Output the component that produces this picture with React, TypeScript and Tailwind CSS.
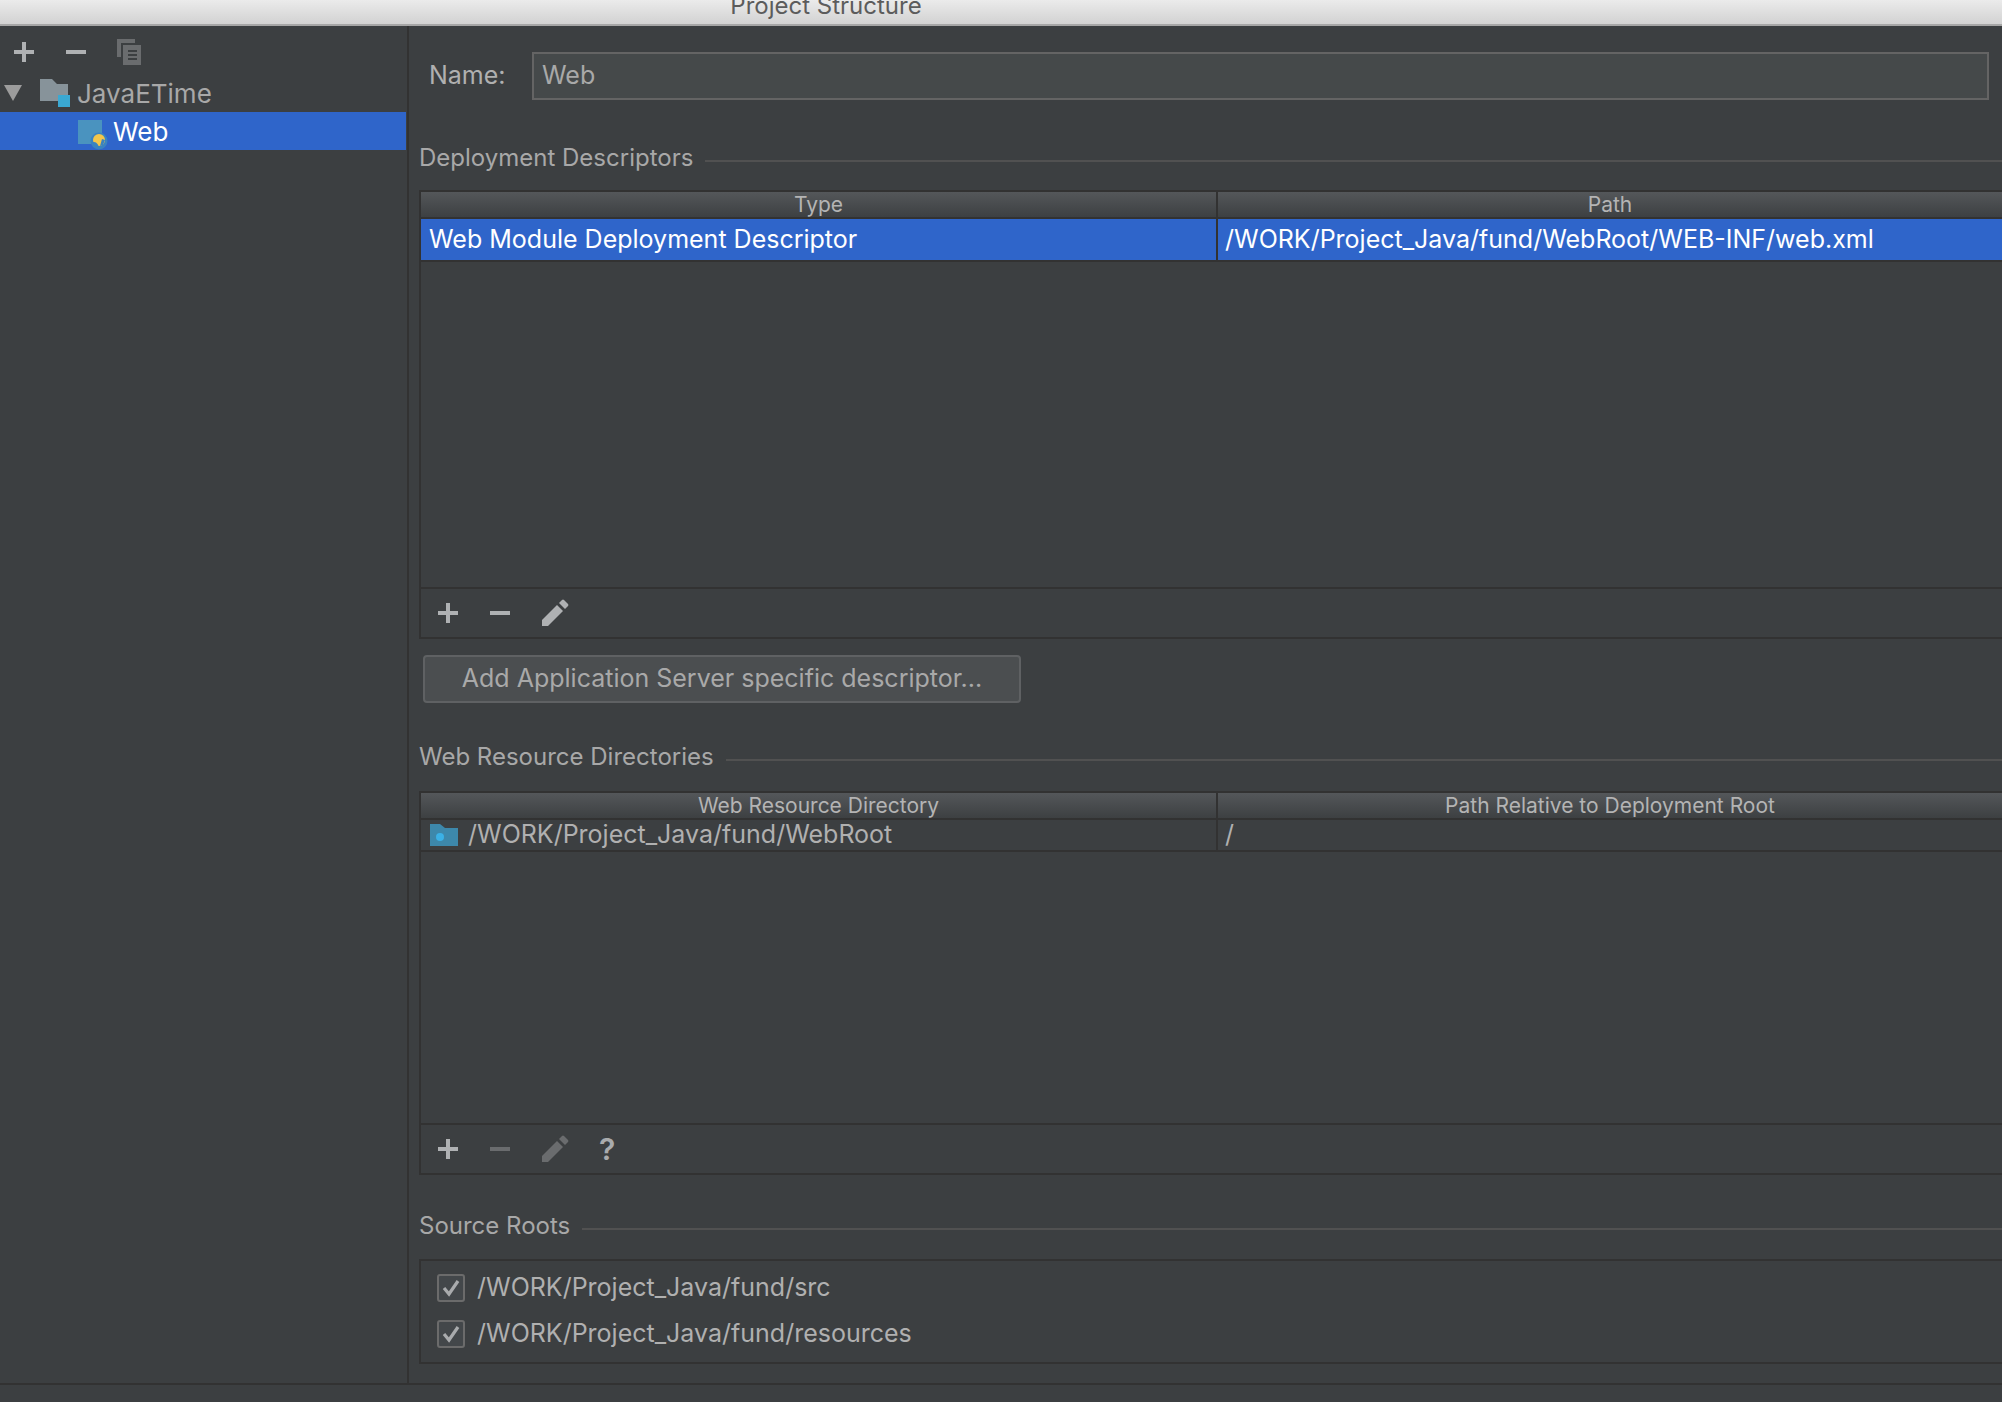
import type { ReactNode } from 'react';

const iconGray = '#afb1b3';
const iconDim = '#6a6c6e';

function PlusIcon({ color = iconGray }: { color?: string }) {
  return (
    <svg width="22" height="22" viewBox="0 0 22 22" fill="none">
      <path d="M11 1v20M1 11h20" stroke={color} strokeWidth="4" />
    </svg>
  );
}

function MinusIcon({ color = iconGray }: { color?: string }) {
  return (
    <svg width="22" height="22" viewBox="0 0 22 22" fill="none">
      <path d="M1 11h20" stroke={color} strokeWidth="4" />
    </svg>
  );
}

function PencilIcon({ color = iconGray }: { color?: string }) {
  return (
    <svg width="28" height="28" viewBox="0 0 28 28" fill={color}>
      <path d="M1 27v-6L16 6l6 6L7 27z" />
      <path d="M18 4l3-3a1.5 1.5 0 0 1 2 0l4 4a1.5 1.5 0 0 1 0 2l-3 3z" />
    </svg>
  );
}

function CopyIcon() {
  return (
    <svg width="24" height="26" viewBox="0 0 24 26" fill={iconDim}>
      <path d="M0 0h18v4H4v14H0z" />
      <path fillRule="evenodd" d="M6 6h18v20H6zM11 11v2h9v-2zM11 15v2h9v-2zM11 19v2h9v-2z" />
    </svg>
  );
}

function FolderIcon() {
  return (
    <svg width="30" height="28" viewBox="0 0 30 28">
      <path d="M0 0h12l5 5h11v17H0z" fill="#87939a" />
      <rect x="18" y="16" width="12" height="12" fill="#3c3f41" />
      <rect x="18" y="16" width="12" height="12" fill="#3aa9d3" />
    </svg>
  );
}

function WebModuleIcon() {
  return (
    <svg width="30" height="30" viewBox="0 0 30 30">
      <rect x="0" y="0" width="24" height="24" fill="#4a93bf" />
      <circle cx="21" cy="21" r="8.5" fill="#3a83c0" />
      <circle cx="21" cy="20" r="6" fill="#f3c64a" />
      <path d="M15 22c3 0 5 1 6 6h-3c-2-1-3-3-3-6zM24 19l3 1-2 5-3 1z" fill="#3a83c0" />
    </svg>
  );
}

function BlueFolderIcon() {
  return (
    <svg width="28" height="22" viewBox="0 0 28 22">
      <path d="M0 0h10l5 4h13v18H0z" fill="#3d88ab" />
      <circle cx="10" cy="13" r="4" fill="#3bb1e6" />
    </svg>
  );
}

function Checkbox() {
  return (
    <span className="flex h-[28px] w-[28px] shrink-0 items-center justify-center rounded-[3px] border-2 border-[#6b6b6b] bg-[#43474a]">
      <svg width="18" height="18" viewBox="0 0 18 18" fill="none">
        <path d="M2 9l5 6 9-13" stroke="#a9abad" strokeWidth="3.2" />
      </svg>
    </span>
  );
}

function SectionTitle({ children }: { children: ReactNode }) {
  return (
    <div className="flex h-[30px] items-center gap-[12px] text-[24px] text-[#a8a8a8]">
      <span className="shrink-0">{children}</span>
      <span className="mt-[6px] h-[2px] flex-1 bg-[#515151]" />
    </div>
  );
}

function HeaderCell({ children, wide }: { children: ReactNode; wide?: boolean }) {
  return (
    <div className={wide ? 'flex-1 text-center' : 'w-[797px] shrink-0 border-r-2 border-[#323232] text-center'}>
      {children}
    </div>
  );
}

function TableHeader({ left, right }: { left: string; right: string }) {
  return (
    <div className="flex h-[27px] items-center border-b-2 border-[#323232] bg-gradient-to-b from-[#54575a] to-[#3d4042] text-[21px] leading-[27px] text-[#b4b4b4]">
      <HeaderCell>{left}</HeaderCell>
      <HeaderCell wide>{right}</HeaderCell>
    </div>
  );
}

function Toolbar({ children }: { children: ReactNode }) {
  return (
    <div className="flex h-[50px] items-center gap-[30px] border-t-2 border-[#323232] pl-[16px]">{children}</div>
  );
}

function App() {
  return (
    <div
      className="flex h-[1402px] w-full flex-col overflow-hidden bg-[#3c3f41] text-[#b3b3b3]"
      style={{ fontFamily: 'Inter, "Liberation Sans", sans-serif' }}
    >
      {/* title bar, text is cut by the top of the crop */}
      <div className="flex h-[26px] shrink-0 items-end justify-center overflow-hidden border-b-2 border-[#a6a6a6] bg-gradient-to-b from-[#ebebeb] to-[#d2d2d2] pr-[350px]">
        <span className="text-[24px] leading-[36px] text-[#5c5c5c]">Project Structure</span>
      </div>

      <div className="flex h-[1359px] shrink-0 border-b-2 border-[#323232]">
        <aside className="flex w-[409px] shrink-0 flex-col border-r-2 border-[#323232] pr-px">
          <div className="flex h-[48px] items-center gap-[30px] pl-[13px] pt-[4px]">
            <PlusIcon />
            <MinusIcon />
            <CopyIcon />
          </div>
          <div className="flex h-[38px] items-center text-[26px] text-[#a8a8a8]">
            <svg width="18" height="16" viewBox="0 0 18 16" className="ml-[4px] mr-[18px]">
              <path d="M0 0h18L9 16z" fill="#9c9c9c" />
            </svg>
            <FolderIcon />
            <span className="ml-[7px]">JavaETime</span>
          </div>
          <div className="flex h-[38px] items-center bg-[#2f65ca] pl-[78px] text-[26px] text-white">
            <span className="mt-[7px]">
              <WebModuleIcon />
            </span>
            <span className="ml-[5px]">Web</span>
          </div>
        </aside>

        <main className="flex min-w-0 flex-1 flex-col pl-[10px]">
          <div className="flex h-[48px] items-center pl-[10px] mt-[26px] text-[25px] pr-[13px]">
            <span className="w-[103px] shrink-0 text-[#b0b0b0]">Name:</span>
            <div className="flex h-full flex-1 items-center border-2 border-[#646464] bg-[#45494a] pl-[8px] text-[#a9a9a9]">
              Web
            </div>
          </div>

          <div className="mt-[43px]">
            <SectionTitle>Deployment Descriptors</SectionTitle>
          </div>
          <div className="mt-[17px] flex h-[449px] flex-col border-y-2 border-l-2 border-[#323232]">
            <TableHeader left="Type" right="Path" />
            <div className="flex h-[43px] items-center border-b-2 border-[#323232] bg-[#2f65ca] text-[25px] text-white">
              <div className="flex h-full w-[797px] shrink-0 items-center border-r-2 border-[#323232] pl-[8px]">
                Web Module Deployment Descriptor
              </div>
              <div className="pl-[7px]">/WORK/Project_Java/fund/WebRoot/WEB-INF/web.xml</div>
            </div>
            <div className="flex-1" />
            <Toolbar>
              <PlusIcon />
              <MinusIcon />
              <PencilIcon />
            </Toolbar>
          </div>

          <button className="ml-[4px] mt-[16px] flex h-[48px] w-[598px] items-center justify-center rounded-[4px] border-2 border-[#5f6163] bg-[#4b4e50] text-[25px] text-[#a9a9a9]">
            Add Application Server specific descriptor...
          </button>

          <div className="mt-[39px]">
            <SectionTitle>Web Resource Directories</SectionTitle>
          </div>
          <div className="mt-[19px] flex h-[384px] flex-col border-y-2 border-l-2 border-[#323232]">
            <TableHeader left="Web Resource Directory" right="Path Relative to Deployment Root" />
            <div className="flex h-[32px] items-center border-b-2 border-[#323232] text-[25px] text-[#b0b0b0]">
              <div className="flex h-full w-[797px] shrink-0 items-center gap-[10px] border-r-2 border-[#323232] pl-[9px]">
                <BlueFolderIcon />
                /WORK/Project_Java/fund/WebRoot
              </div>
              <div className="pl-[7px]">/</div>
            </div>
            <div className="flex-1" />
            <Toolbar>
              <PlusIcon />
              <MinusIcon color={iconDim} />
              <PencilIcon color={iconDim} />
              <span className="text-[30px] font-semibold leading-none text-[#a9abad]">?</span>
            </Toolbar>
          </div>

          <div className="mt-[36px]">
            <SectionTitle>Source Roots</SectionTitle>
          </div>
          <div className="mt-[18px] flex h-[105px] flex-col gap-[18px] border-y-2 border-l-2 border-[#323232] pl-[16px] pt-[13px] text-[25px] text-[#b0b0b0]">
            <div className="flex h-[28px] items-center gap-[12px]">
              <Checkbox />
              /WORK/Project_Java/fund/src
            </div>
            <div className="flex h-[28px] items-center gap-[12px]">
              <Checkbox />
              /WORK/Project_Java/fund/resources
            </div>
          </div>
        </main>
      </div>
    </div>
  );
}

export default App;
